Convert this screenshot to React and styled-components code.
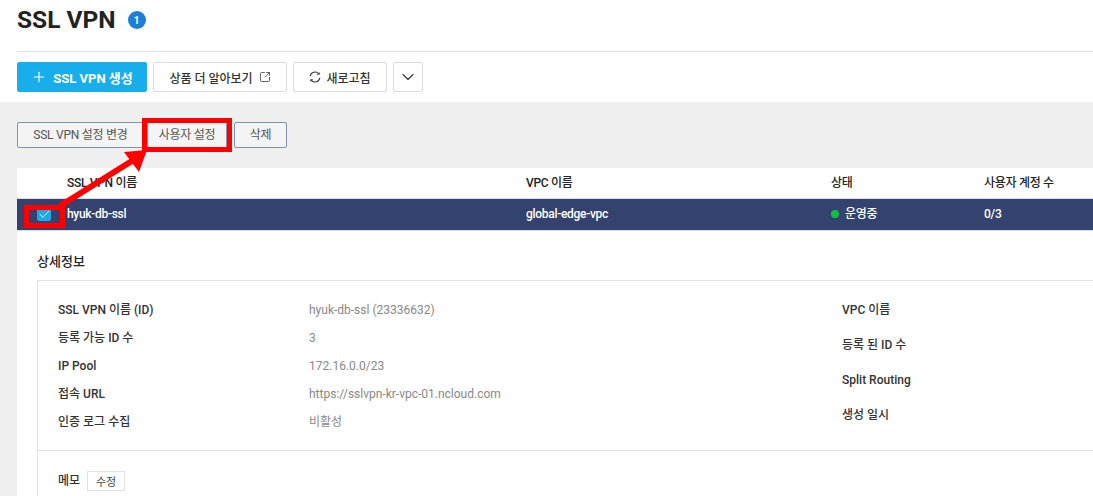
import React from "react";
import styled, { createGlobalStyle } from "styled-components";
import { Plus, SquareArrowOutUpRight, ChevronDown, Check } from "lucide-react";

const FONT = `Roboto, "Noto Sans CJK KR", sans-serif`;

const GlobalStyle = createGlobalStyle`
  html, body {
    margin: 0;
    height: 100%;
    overflow: hidden;
    background: #fff;
    font-family: ${FONT};
  }
  * { box-sizing: border-box; }
`;

const Page = styled.div`
  position: relative;
  width: 1093px;
  height: 496px;
  overflow: hidden;
  background: #fff;
`;

const Header = styled.header`
  height: 102px;
  padding-left: 17px;
`;

const TitleRow = styled.div`
  height: 52px;
  display: flex;
  align-items: flex-start;
  gap: 12px;
  padding-top: 4px;
  border-bottom: 1px solid #e2e2e2;
`;

const Title = styled.h1`
  margin: 0;
  font-size: 24.5px;
  line-height: 32px;
  font-weight: 700;
  color: #222;
`;

const CountBadge = styled.span`
  margin-top: 7px;
  width: 18px;
  height: 18px;
  border-radius: 50%;
  background: #1c7ed6;
  color: #fff;
  font-size: 10px;
  font-weight: 700;
  display: flex;
  align-items: center;
  justify-content: center;
`;

const Toolbar = styled.div`
  display: flex;
  gap: 6px;
  margin-top: 10px;
`;

const ToolButton = styled.button`
  height: 30px;
  padding: 0;
  width: ${({ $w }) => $w}px;
  display: flex;
  align-items: center;
  justify-content: center;
  gap: ${({ $gap }) => $gap || 6}px;
  font-family: ${FONT};
  font-size: 12px;
  font-weight: 500;
  color: #333;
  background: #fff;
  border: 1px solid #dcdcdc;
  border-radius: 2px;
`;

const PrimaryButton = styled(ToolButton)`
  background: #18aeeb;
  border-color: #18aeeb;
  color: #fff;
  font-size: 13px;
  font-weight: 700;
`;

const Content = styled.main`
  height: 394px;
  background: #f0f0f0;
  padding: 20px 0 0 17px;
`;

const ActionRow = styled.div`
  display: flex;
`;

const ActionButton = styled.button`
  height: 26px;
  width: ${({ $w }) => $w}px;
  margin-left: ${({ $gap }) => $gap || 0}px;
  padding: 0 0 1px;
  font-family: ${FONT};
  font-size: 12px;
  line-height: 16px;
  letter-spacing: -0.25px;
  color: #555;
  background: #f4f4f4;
  border: 1px solid #7f93ad;
  border-radius: 2px;
`;

const Panel = styled.section`
  margin-top: 20px;
  background: #fff;
  height: 328px;
`;

const TableHead = styled.div`
  display: grid;
  grid-template-columns: 50px 459px 305px 153px 1fr;
  align-items: center;
  height: 31px;
  padding-bottom: 1px;
  border-bottom: 1px solid #ddd;
  font-size: 12px;
  line-height: 16px;
  font-weight: 500;
  letter-spacing: -0.3px;
  color: #222;
`;

const TableRow = styled(TableHead)`
  height: 32px;
  background: #34426f;
  color: #fff;
  border-bottom: 1px solid #ddd;
`;

const CheckBox = styled.span`
  margin-left: 20px;
  width: 14px;
  height: 14px;
  border-radius: 2px;
  background: #1fa8e8;
  display: flex;
  align-items: center;
  justify-content: center;
  color: #fff;
`;

const Status = styled.span`
  display: flex;
  align-items: center;
  gap: 6px;
`;

const Dot = styled.i`
  width: 8px;
  height: 8px;
  border-radius: 50%;
  background: #0cc244;
`;

const Detail = styled.div`
  padding: 22px 0 0 20px;
`;

const DetailTitle = styled.h2`
  margin: 0;
  font-size: 13px;
  line-height: 18px;
  font-weight: 500;
  color: #222;
`;

const DetailBox = styled.div`
  margin-top: 9px;
  border: 1px solid #e2e2e2;
  border-right: 0;
  height: 300px;
`;

const DetailGrid = styled.div`
  display: grid;
  grid-template-columns: 784px 1fr;
  height: 170px;
  padding: 15px 0 0 20px;
  border-bottom: 1px solid #e2e2e2;
`;

const LeftList = styled.dl`
  margin: 0;
  display: grid;
  grid-template-columns: 251px 1fr;
  grid-auto-rows: 28px;
  align-items: center;
`;

const RightList = styled.dl`
  margin: 0;
  display: grid;
  grid-auto-rows: 28px;
  row-gap: 7px;
  align-content: start;
  align-items: center;
`;

const Term = styled.dt`
  font-size: 12px;
  line-height: 16px;
  font-weight: 500;
  color: #333;
`;

const Value = styled.dd`
  margin: 0;
  font-size: 12px;
  line-height: 16px;
  color: #888;
`;

const MemoRow = styled.div`
  display: flex;
  align-items: center;
  gap: 7px;
  padding: 20px 0 0 20px;
`;

const MemoEdit = styled.button`
  width: 38px;
  height: 20px;
  padding: 0;
  font-family: ${FONT};
  font-size: 11px;
  color: #444;
  background: #fff;
  border: 1px solid #e2e2e2;
`;

const Annotation = styled.svg`
  position: absolute;
  inset: 0;
  pointer-events: none;
`;

const RefreshIcon = () => (
  <svg width="12" height="12" viewBox="0 0 12 12" fill="none" stroke="#333" strokeWidth="1.1">
    <path d="M1.2 5.2A4.9 4.9 0 0 1 9.6 2.6" />
    <path d="M10.8 6.8A4.9 4.9 0 0 1 2.4 9.4" />
    <path d="M10.6 1v2.8H7.8L10.6 1Z" fill="#333" stroke="none" />
    <path d="M1.4 11V8.2h2.8L1.4 11Z" fill="#333" stroke="none" />
  </svg>
);

const details = [
  ["SSL VPN 이름 (ID)", "hyuk-db-ssl (23336632)"],
  ["등록 가능 ID 수", "3"],
  ["IP Pool", "172.16.0.0/23"],
  ["접속 URL", "https://sslvpn-kr-vpc-01.ncloud.com"],
  ["인증 로그 수집", "비활성"],
];

const App = () => (
  <Page>
    <GlobalStyle />
    <Header>
      <TitleRow>
        <Title>SSL VPN</Title>
        <CountBadge>1</CountBadge>
      </TitleRow>
      <Toolbar>
        <PrimaryButton $w={130} $gap={6}>
          <Plus size={16} strokeWidth={1.7} />
          SSL VPN 생성
        </PrimaryButton>
        <ToolButton $w={134}>
          상품 더 알아보기
          <SquareArrowOutUpRight size={12} strokeWidth={1.5} />
        </ToolButton>
        <ToolButton $w={94} $gap={5}>
          <RefreshIcon />
          새로고침
        </ToolButton>
        <ToolButton $w={30}>
          <ChevronDown size={20} strokeWidth={1.3} />
        </ToolButton>
      </Toolbar>
    </Header>
    <Content>
      <ActionRow>
        <ActionButton $w={127}>SSL VPN 설정 변경</ActionButton>
        <ActionButton $w={80} $gap={3}>사용자 설정</ActionButton>
        <ActionButton $w={53} $gap={7}>삭제</ActionButton>
      </ActionRow>
      <Panel>
        <TableHead>
          <span />
          <span>SSL VPN 이름</span>
          <span>VPC 이름</span>
          <span>상태</span>
          <span>사용자 계정 수</span>
        </TableHead>
        <TableRow>
          <CheckBox>
            <Check size={13} strokeWidth={1.5} />
          </CheckBox>
          <span>hyuk-db-ssl</span>
          <span>global-edge-vpc</span>
          <Status>
            <Dot />
            운영중
          </Status>
          <span>0/3</span>
        </TableRow>
        <Detail>
          <DetailTitle>상세정보</DetailTitle>
          <DetailBox>
            <DetailGrid>
              <LeftList>
                {details.map(([term, value]) => (
                  <React.Fragment key={term}>
                    <Term>{term}</Term>
                    <Value>{value}</Value>
                  </React.Fragment>
                ))}
              </LeftList>
              <RightList>
                <Term>VPC 이름</Term>
                <Term>등록 된 ID 수</Term>
                <Term>Split Routing</Term>
                <Term>생성 일시</Term>
              </RightList>
            </DetailGrid>
            <MemoRow>
              <Term>메모</Term>
              <MemoEdit>수정</MemoEdit>
            </MemoRow>
          </DetailBox>
        </Detail>
      </Panel>
    </Content>
    <Annotation width="1093" height="496" viewBox="0 0 1093 496">
      <rect x="144.5" y="120.5" width="85" height="29" fill="none" stroke="#f00" strokeWidth="5" />
      <rect x="26.5" y="207.5" width="36" height="18" fill="none" stroke="#f00" strokeWidth="5" />
      <path d="M60 206 L135 159" stroke="#f00" strokeWidth="6" fill="none" />
      <path d="M147 150 L124 152 L139 172 Z" fill="#f00" />
    </Annotation>
  </Page>
);

export default App;
